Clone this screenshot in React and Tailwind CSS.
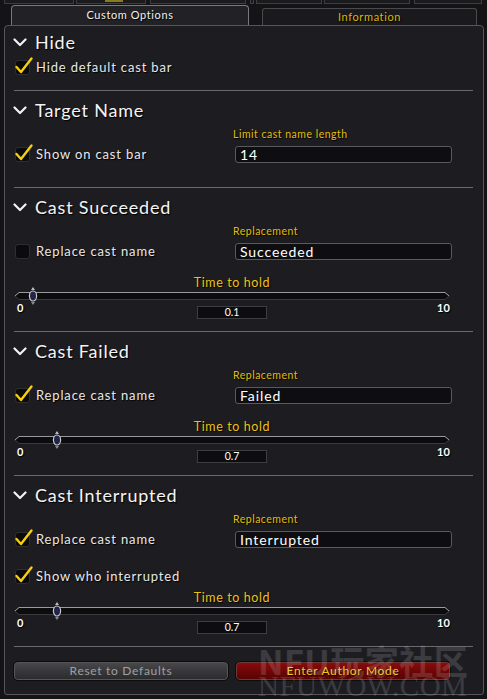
import React from "react";

const FONT = { fontFamily: "Lato, 'Open Sans', sans-serif" };
const SHADOW = { textShadow: "1px 1px 1px #000" };

function Chevron() {
  return (
    <svg width="14" height="9" viewBox="0 0 14 9" className="shrink-0">
      <path d="M1.5 1.5 L7 7 L12.5 1.5" stroke="#f2f2f2" strokeWidth="2.2" fill="none" strokeLinecap="round" strokeLinejoin="round" />
    </svg>
  );
}

function Header({ title }) {
  return (
    <div className="flex items-center h-[22px] gap-[8px]">
      <Chevron />
      <span className="text-[18px] leading-[22px] text-[#f4f4f4] tracking-[0.8px]" style={SHADOW}>
        {title}
      </span>
    </div>
  );
}

function Check({ checked, label }) {
  return (
    <div className="flex items-center h-[18px] ml-[2px] gap-[6px]">
      <div className="relative w-[15px] h-[15px] rounded-[3px] bg-[#0b0b0d] border border-[#2e2e32] shrink-0">
        {checked && (
          <svg width="20" height="20" viewBox="0 0 20 20" className="absolute left-[-2px] top-[-5px]">
            <path d="M2.5 11 L7 16 L17.5 2.5" stroke="#f5cf10" strokeWidth="2.4" fill="none" strokeLinecap="round" strokeLinejoin="round" />
          </svg>
        )}
      </div>
      <span className="text-[13px] leading-[18px] text-[#e8e8e8] tracking-[0.85px]" style={SHADOW}>
        {label}
      </span>
    </div>
  );
}

function Divider({ className = "" }) {
  return <div className={"h-px ml-[1px] w-[459px] bg-[#6a6a6c] " + className} />;
}

function InputRow({ checkLabel, checked, label, value }) {
  return (
    <div className="flex mt-[7px]">
      <div className="w-[220px] flex flex-col justify-end">
        <Check checked={checked} label={checkLabel} />
      </div>
      <div className="flex flex-col">
        <div className="h-[12px] text-[10.5px] leading-[12px] text-[#e3bd0a] tracking-[0.5px]" style={SHADOW}>
          {label}
        </div>
        <div className="mt-[6px] ml-[2px] w-[217px] h-[17px] rounded-[3px] bg-[#0e0e11] border border-[#5a5a5e] flex items-center pl-[4px]">
          <span className="text-[14px] leading-[15px] text-white tracking-[0.9px]">{value}</span>
        </div>
      </div>
    </div>
  );
}

function Thumb() {
  return (
    <svg width="10" height="18" viewBox="0 0 10 18">
      <path d="M5 0 L7 3 L3 3 Z" fill="#bcbcbc" />
      <path d="M5 18 L7 15 L3 15 Z" fill="#8a8a8a" />
      <ellipse cx="5" cy="9" rx="3.6" ry="5" fill="#23244a" stroke="#c8c8c8" strokeWidth="1.2" />
    </svg>
  );
}

function Slider({ value, pos, mt }) {
  return (
    <div className={"flex flex-col " + mt}>
      <div className="h-[12px] text-center w-[436px] ml-[1px] text-[12.5px] leading-[12px] text-[#eec218] tracking-[0.6px]" style={SHADOW}>
        Time to hold
      </div>
      <div className="relative mt-[2px] h-[10px] ml-[1px] w-[436px]">
        <svg width="436" height="10" viewBox="0 0 436 10" className="absolute left-0 top-0">
          <polygon points="0.5,5 5,1.5 431,1.5 435.5,5 431,8.5 5,8.5" fill="#0c0c0e" stroke="#3a3a3c" strokeWidth="1" />
          <path d="M1 5 L5 1.5 L431 1.5 L435 5" stroke="#9a9a9c" strokeWidth="1" fill="none" />
        </svg>
        <div className="absolute top-[-4px]" style={{ left: pos - 14 - 5 }}>
          <Thumb />
        </div>
      </div>
      <div className="relative mt-[2px] h-[16px] ml-[1px] w-[436px]">
        <span className="absolute left-[3px] top-0 text-[11px] leading-[10px] font-bold text-white" style={SHADOW}>0</span>
        <span className="absolute left-[423px] top-0 text-[11px] leading-[10px] font-bold text-white" style={SHADOW}>10</span>
        <div className="absolute left-[183px] top-[3px] w-[70px] h-[13px] bg-[#0d0d10] border border-[#3e3e42] flex items-center justify-center">
          <span className="text-[10.5px] leading-[11px] text-white">{value}</span>
        </div>
      </div>
    </div>
  );
}

function TopStrip() {
  const cells = [
    [4, 70], [76, 70], [150, 96], [250, 4], [256, 66], [324, 86], [414, 68],
  ];
  return (
    <div className="relative h-[5px] bg-[#141416]">
      {cells.map(([l, w], i) => (
        <div key={i} className="absolute top-0 h-[4px] border-x border-b border-[#3e3e42] bg-[#1b1b1e]" style={{ left: l, width: w }} />
      ))}
      <div className="absolute left-[105px] top-0 w-[18px] h-[2px] bg-[#8a7a20]" />
    </div>
  );
}

export default function App() {
  return (
    <div className="relative w-[487px] h-[699px] bg-[#141416] overflow-hidden" style={FONT}>
      <TopStrip />
      <div className="flex h-[20px] items-end">
        <div className="ml-[11px] w-[238px] h-[20px] rounded-t-[4px] border border-b-0 border-[#7a7a7e] bg-[#222226] flex items-center justify-center">
          <span className="text-[11px] text-[#f0f0f0] tracking-[0.6px]" style={SHADOW}>Custom Options</span>
        </div>
        <div className="ml-[13px] w-[215px] h-[17px] rounded-t-[3px] border border-b-0 border-[#4a4a4e] bg-[#1a1a1d] flex items-center justify-center">
          <span className="text-[11px] text-[#d9b60c] tracking-[0.6px]" style={SHADOW}>Information</span>
        </div>
      </div>
      <div className="ml-[4px] w-[480px] h-[670px] rounded-t-[4px] rounded-b-[3px] border border-[#56565a] bg-[#1d1d21] pl-[8px] pt-[5px] flex flex-col">
        <Header title="Hide" />
        <div className="mt-[5px]">
          <Check checked label="Hide default cast bar" />
        </div>
        <Divider className="mt-[14px]" />

        <div className="mt-[8px]"><Header title="Target Name" /></div>
        <InputRow checkLabel="Show on cast bar" checked label="Limit cast name length" value="14" />
        <Divider className="mt-[24px]" />

        <div className="mt-[8px]"><Header title="Cast Succeeded" /></div>
        <InputRow checkLabel="Replace cast name" checked={false} label="Replacement" value="Succeeded" />
        <Slider value="0.1" pos={33} mt="mt-[17px]" />
        <Divider className="mt-[12px]" />

        <div className="mt-[8px]"><Header title="Cast Failed" /></div>
        <InputRow checkLabel="Replace cast name" checked label="Replacement" value="Failed" />
        <Slider value="0.7" pos={57} mt="mt-[17px]" />
        <Divider className="mt-[12px]" />

        <div className="mt-[8px]"><Header title="Cast Interrupted" /></div>
        <InputRow checkLabel="Replace cast name" checked label="Replacement" value="Interrupted" />
        <div className="mt-[19px]">
          <Check checked label="Show who interrupted" />
        </div>
        <Slider value="0.7" pos={57} mt="mt-[7px]" />
        <Divider className="mt-[12px]" />

        <div className="mt-[14px] flex gap-[6px]">
          <button className="w-[216px] h-[20px] rounded-[5px] border border-[#0c0c0c] bg-gradient-to-b from-[#4a4a4d] via-[#38383b] to-[#2a2a2c] shadow-[inset_0_0_0_1px_#555] flex items-center justify-center">
            <span className="text-[12px] text-[#a0a0a2] tracking-[0.7px]">Reset to Defaults</span>
          </button>
          <button className="w-[216px] h-[20px] rounded-[5px] border border-[#0c0c0c] bg-gradient-to-b from-[#8e0c0c] via-[#700606] to-[#560303] shadow-[inset_0_0_0_1px_#6a3a3a] flex items-center justify-center">
            <span className="text-[12px] text-[#f5c51e] tracking-[0.7px]" style={SHADOW}>Enter Author Mode</span>
          </button>
        </div>
      </div>
      <div className="absolute left-[258px] top-[643px] pointer-events-none select-none opacity-[0.16]">
        <div className="text-[34px] leading-[36px] font-bold text-[#e0e0e0] tracking-[0.5px]" style={{ fontFamily: "'Noto Sans CJK SC', 'DejaVu Sans', sans-serif" }}>
          NFU玩家社区
        </div>
        <div className="text-[29px] leading-[26px] text-[#d8d8d8] tracking-[0.5px] -mt-[6px]" style={{ fontFamily: "'Liberation Serif', serif" }}>
          NFUWOW.COM
        </div>
      </div>
    </div>
  );
}
